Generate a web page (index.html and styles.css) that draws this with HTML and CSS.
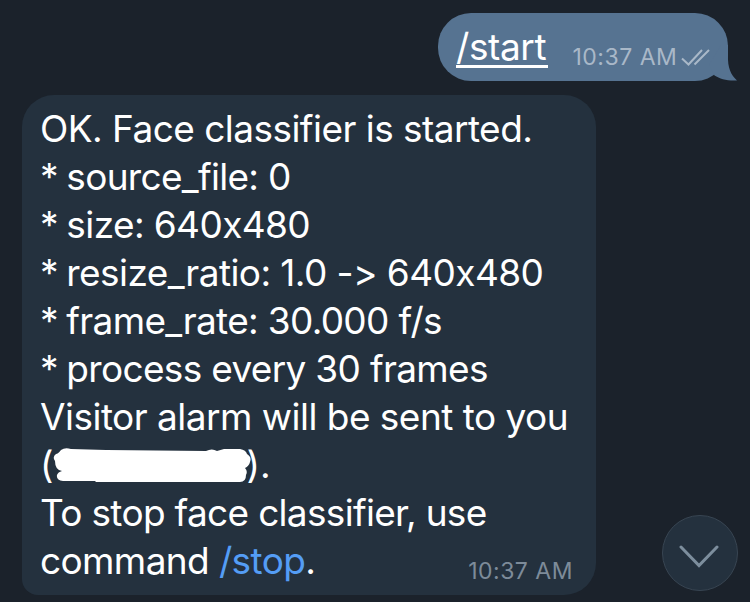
FILE: index.html
```html
<!DOCTYPE html>
<html lang="en">
<head>
<meta charset="utf-8">
<title>Chat</title>
<link rel="stylesheet" href="styles.css">
</head>
<body>
<main class="chat">
  <section class="bubble outgoing">
    <a class="command">/start</a>
    <span class="time">10:37 AM</span>
    <svg class="checks" width="32" height="22" viewBox="0 0 32 22"><path d="M2 12.500 8.500 18.500 22 4M14.500 18.500 29 4"/></svg>
    <svg class="tail" width="28" height="36" viewBox="0 0 28 36"><path d="M19 0V10C18.500 23 22 30 28 35.500C18 36 11 34 5.500 30.500L0 20L12 0Z"/></svg>
  </section>
  <section class="bubble incoming">
    <p class="line l1">OK. Face classifier is started.</p>
    <p class="line l2"><span class="star">* </span>source_file: 0</p>
    <p class="line l3"><span class="star">* </span>size: 640x480</p>
    <p class="line l4"><span class="star">* </span>resize_ratio: 1.0 -&gt; 640x480</p>
    <p class="line l5"><span class="star">* </span>frame_rate: 30.000 f/s</p>
    <p class="line l6"><span class="star">* </span>process every 30 frames</p>
    <p class="line l7">Visitor alarm will be sent to you</p>
    <p class="line l8"><span>(</span><svg class="redaction" width="198" height="36" viewBox="0 0 198 36"><path d="M8 2Q12-1 18 1L53 2 153 3Q159 0 164 3L171 1H187Q193 2 194 6Q199 9 197 14Q196 18 192 20Q195 23 193 27Q193 34 187 34H43L42 33H10Q3 32 4 27Q5 24 9 23Q2 22 2 13Q-1 9 3 6Q5 6 8 2Z"/></svg><span class="closing">).</span></p>
    <p class="line l9">To stop face classifier, use</p>
    <div class="last"><p class="line l10">command <a class="link">/stop</a>.</p><span class="time">10:37 AM</span></div>
  </section>
  <button class="scroll" aria-label="Scroll down"><svg width="40" height="24" viewBox="0 0 40 24"><path d="M2 2 20 20.500 38 2"/></svg></button>
</main>
</body>
</html>
```
FILE: styles.css
```css
* { box-sizing: border-box; }
body { margin: 0; background: #1b222b; font-family: Inter, "Liberation Sans", sans-serif; font-feature-settings: "calt" 0, "liga" 0; color: #fff; }
.chat { position: relative; height: 602px; padding: 13px 22px 0; overflow: hidden; }
.bubble { position: relative; }
.outgoing { display: flex; width: 290px; height: 68px; margin-left: 416px; padding-left: 18px; background: #567391; border-radius: 33px; }
.command { width: 92px; height: 55px; font-size: 37px; line-height: 68px; letter-spacing: -0.4px; border-bottom: 3px solid #fff; white-space: nowrap; }
.time { font-size: 23px; line-height: 28px; letter-spacing: 0.5px; white-space: nowrap; color: #7d8b99; }
.outgoing .time { margin: 30px 0 0 24.5px; width: 106.5px; color: #a9b8c8; }
.checks { margin: 33px 0 0 1px; fill: none; stroke: #a9b8c8; stroke-width: 2; flex: none; }
.tail { position: absolute; left: 271px; top: 32px; fill: #567391; }
.incoming { width: 574px; height: 500px; margin-top: 14px; padding: 10px 18px 0; background: #24313e; border-radius: 32px 32px 32px 16px; }
.line { margin: 0; height: 48px; font-size: 37px; line-height: 48px; white-space: pre; }
.star { letter-spacing: -1.3px; }
.l1 { letter-spacing: -0.54px; }
.l2 { letter-spacing: -0.7px; }
.l3 { letter-spacing: -0.6px; }
.l4 { letter-spacing: -0.57px; }
.l5 { letter-spacing: -0.68px; }
.l6 { letter-spacing: -0.68px; }
.l7 { letter-spacing: -0.52px; }
.l9 { letter-spacing: -0.69px; }
.l10 { letter-spacing: -0.62px; }
.l8 { display: flex; }
.redaction { margin: 7px 0 0 -1px; fill: #fff; flex: none; }
.closing { margin-left: -4px; }
.link { color: #549df5; }
.last { display: flex; justify-content: space-between; }
.last .time { margin: 20px 5px 0 0; }
.scroll { position: absolute; left: 662px; top: 515px; width: 76px; height: 76px; padding: 0; display: grid; place-items: center; border: 1px solid #384552; border-radius: 50%; background: #24313e; }
.scroll svg { margin: 7px 2px 0 0; fill: none; stroke: #7d8e9d; stroke-width: 3; stroke-linecap: round; }
```
